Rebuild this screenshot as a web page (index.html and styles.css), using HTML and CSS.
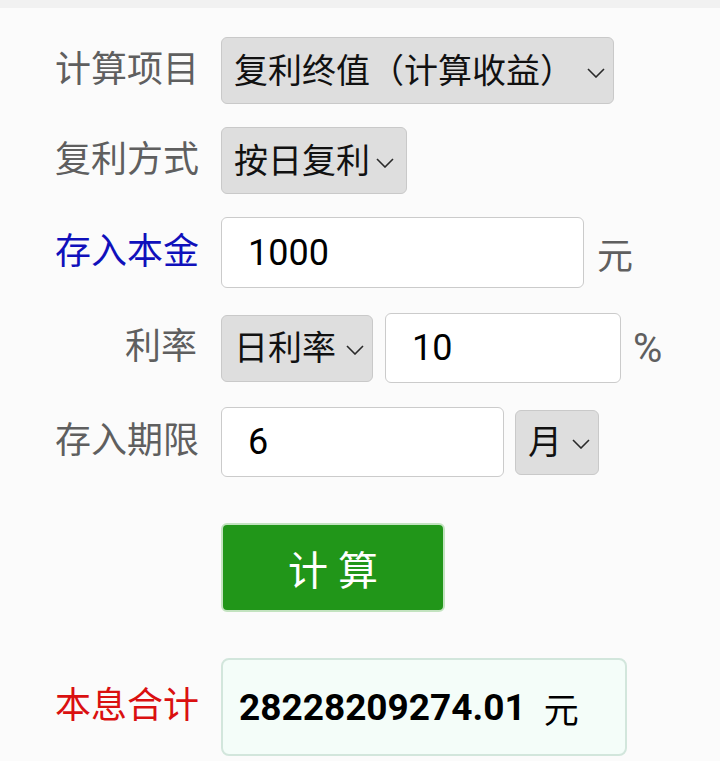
FILE: index.html
```html
<!DOCTYPE html>
<html lang="zh-CN">
<head>
<meta charset="utf-8">
<title>复利计算器</title>
<link rel="stylesheet" href="styles.css">
</head>
<body>
<div class="topbar"></div>
<main class="calc">
  <div class="row">
    <label class="lbl">计算项目</label>
    <div class="sel sel-item">
      <select><option>复利终值（计算收益）</option></select>
      <svg class="chev" viewBox="0 0 18 10"><polyline points="1,1 9,9 17,1"/></svg>
    </div>
  </div>
  <div class="row">
    <label class="lbl">复利方式</label>
    <div class="sel sel-mode">
      <select><option>按日复利</option></select>
      <svg class="chev" viewBox="0 0 18 10"><polyline points="1,1 9,9 17,1"/></svg>
    </div>
  </div>
  <div class="row">
    <label class="lbl lbl-blue">存入本金</label>
    <input class="inp inp-principal" type="text" value="1000">
    <span class="unit">元</span>
  </div>
  <div class="row row-rate">
    <label class="lbl">利率</label>
    <div class="sel sel-rate">
      <select><option>日利率</option></select>
      <svg class="chev" viewBox="0 0 18 10"><polyline points="1,1 9,9 17,1"/></svg>
    </div>
    <input class="inp inp-rate" type="text" value="10">
    <span class="unit unit-pct">%</span>
  </div>
  <div class="row row-term">
    <label class="lbl">存入期限</label>
    <input class="inp inp-term" type="text" value="6">
    <div class="sel sel-unit">
      <select><option>月</option></select>
      <svg class="chev" viewBox="0 0 18 10"><polyline points="1,1 9,9 17,1"/></svg>
    </div>
  </div>
  <div class="row row-btn">
    <button class="btn" type="button">计 算</button>
  </div>
  <div class="row row-result">
    <label class="lbl lbl-red">本息合计</label>
    <div class="result"><span class="num">28228209274.01</span><span class="yuan">元</span></div>
  </div>
</main>
</body>
</html>
```
FILE: styles.css
```css
html, body {
  margin: 0;
  padding: 0;
  background: #fbfbfb;
  font-family: "Roboto", "Noto Sans CJK SC", sans-serif;
}

.topbar {
  height: 8px;
  background: #f1f1f1;
}

.calc {
  display: flex;
  flex-direction: column;
  gap: 23px;
  padding: 29px 0 0 55px;
}

.row {
  display: flex;
  align-items: center;
  gap: 12px;
}

.row-rate { margin-top: 2px; }
.row-term { margin-top: 1px; }

.lbl {
  width: 142px;
  margin-right: 12px;
  text-align: right;
  font-size: 36px;
  line-height: 1.2;
  color: #5f5f5f;
  white-space: nowrap;
}

.lbl-blue { color: #1010bb; }
.lbl-red { color: #da1010; }

.sel {
  position: relative;
  height: 67px;
}

.sel select {
  -webkit-appearance: none;
  appearance: none;
  width: 100%;
  height: 100%;
  margin: 0;
  padding: 0 0 0 12px;
  box-sizing: border-box;
  background: #dedede;
  border: 1px solid #c9c9c9;
  border-radius: 6px;
  font-family: inherit;
  font-size: 34px;
  color: #111111;
  outline: none;
}

.chev {
  position: absolute;
  right: 9px;
  top: 50%;
  width: 18px;
  height: 10px;
  margin-top: -3px;
  fill: none;
  stroke: #2a2a2a;
  stroke-width: 1.6;
  pointer-events: none;
}

.sel-item { width: 393px; }
.sel-mode { width: 186px; }
.sel-mode .chev { right: 13px; }
.sel-rate { width: 152px; }
.sel-unit { width: 84px; height: 65px; }

.inp {
  box-sizing: border-box;
  height: 70px;
  margin: 0;
  padding: 0 0 0 26px;
  background: #ffffff;
  border: 1px solid #cbcbcb;
  border-radius: 6px;
  font-family: inherit;
  font-size: 36px;
  color: #000;
  outline: none;
}

.inp-principal { width: 363px; height: 71px; margin-right: 1px; }
.inp-rate { width: 236px; }
.inp-term { width: 283px; margin-right: -1px; }

.unit {
  font-size: 36px;
  color: #5f5f5f;
}

.unit-pct {
  font-size: 40px;
}

.row-btn {
  margin-top: 23px;
  padding-left: 166px;
}

.btn {
  width: 224px;
  height: 89px;
  margin: 0;
  padding: 0;
  background: #219619;
  border: 2px solid #c3e3c0;
  border-radius: 6px;
  color: #ffffff;
  font-family: inherit;
  font-size: 40px;
  cursor: pointer;
}

.row-result {
  margin-top: 23px;
}

.result {
  box-sizing: border-box;
  width: 406px;
  height: 98px;
  display: flex;
  align-items: center;
  padding-left: 16px;
  background: #f4fdf9;
  border: 2px solid #d2e6dc;
  border-radius: 8px;
  color: #000;
}

.num {
  font-size: 37px;
  font-weight: bold;
}

.yuan {
  margin-left: 18px;
  font-size: 35px;
}
```
